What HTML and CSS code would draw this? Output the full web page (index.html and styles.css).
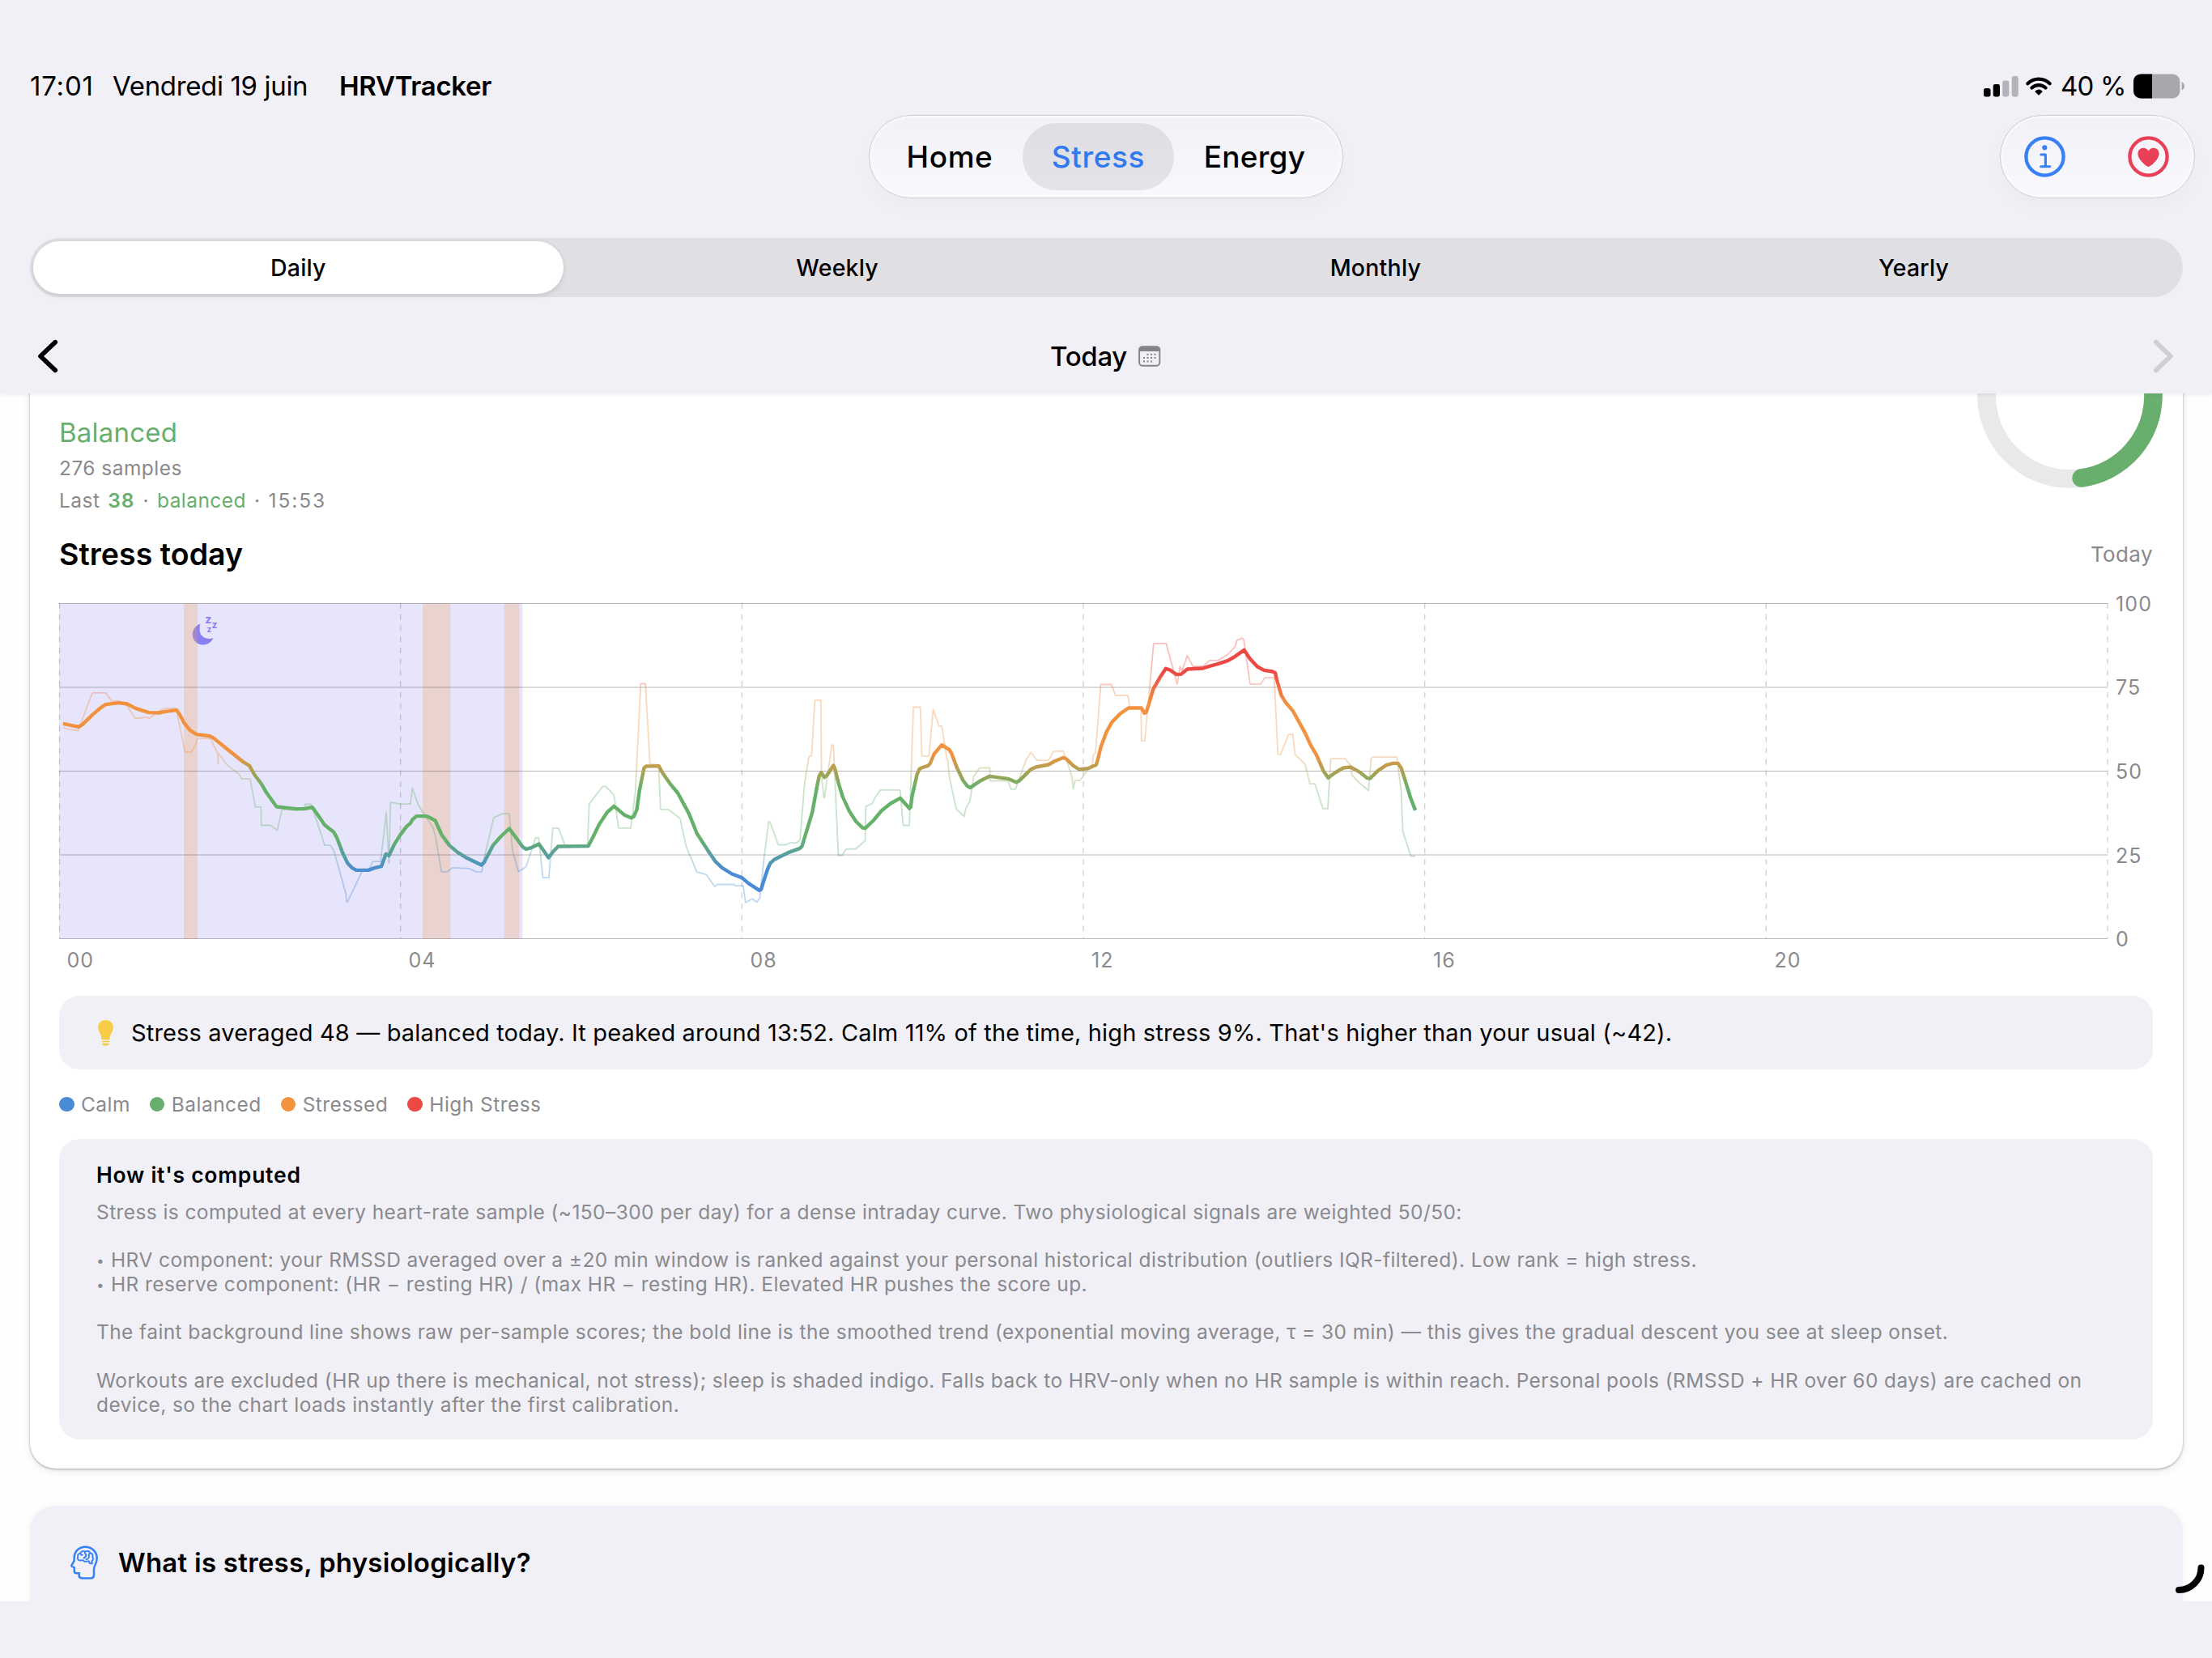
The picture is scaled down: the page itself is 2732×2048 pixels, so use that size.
FILE: index.html
```html
<!DOCTYPE html>
<html lang="en">
<head>
    <meta charset="UTF-8">
    <meta name="viewport" content="width=device-width, initial-scale=1.0">
    <title>HRVTracker</title>
    <link rel="stylesheet" href="styles.css">
</head>
<body>

    <!-- Fixed header -->
    <header class="header">
        <div class="status-bar">
            <div class="status-left">
                <span class="clock">17:01</span>
                <span class="date">Vendredi 19 juin</span>
                <span class="app-name">HRVTracker</span>
            </div>
            <div class="status-right">
                <svg class="signal" width="43" height="26" viewBox="0 0 43 26">
                    <rect x="0" y="15" width="8.5" height="10.4" rx="2.6"/>
                    <rect x="11.7" y="10" width="8.3" height="15.4" rx="2.4"/>
                    <rect class="off" x="23.2" y="5.6" width="8.1" height="19.8" rx="2.4"/>
                    <rect class="off" x="34.7" y="0" width="8.1" height="25.4" rx="2.4"/>
                </svg>
                <svg class="wifi" width="32" height="24" viewBox="0 0 32 24">
                    <path d="M2.4 8.2a19.6 19.6 0 0 1 27.2 0M7.5 13.6a12.3 12.3 0 0 1 17 0"/>
                    <path class="dot" d="M16 22.8l-4.2-4.1a1 1 0 0 1 .1-1.5 6.6 6.6 0 0 1 8.2 0 1 1 0 0 1 .1 1.5z"/>
                </svg>
                <span class="percent">40 %</span>
                <svg class="battery" width="64" height="31" viewBox="0 0 64 31">
                    <clipPath id="cell"><rect x="0" y="0.4" width="57.4" height="30" rx="9"/></clipPath>
                    <g clip-path="url(#cell)">
                        <rect width="58" height="31" fill="#a8a7ad"/>
                        <rect width="23" height="31" fill="#000"/>
                    </g>
                    <path d="M59.6 9.9q3.4 1.6 3.4 5.3t-3.4 5.3z" fill="#a8a7ad"/>
                </svg>
            </div>
        </div>

        <div class="toolbar">
            <nav class="tabs glass">
                <a class="tab tab-home">Home</a>
                <a class="tab tab-stress active">Stress</a>
                <a class="tab tab-energy">Energy</a>
            </nav>
            <div class="actions glass">
                <svg width="51" height="51" viewBox="0 0 51 51" fill="none" stroke="#3880f6" stroke-linecap="round" stroke-linejoin="round">
                    <circle cx="25.5" cy="25.5" r="23.1" stroke-width="4.3"/>
                    <circle cx="25.3" cy="14.3" r="3.1" fill="#3880f6" stroke="none"/>
                    <path d="M20.8 23h5.6v14.6M20.7 37.8h11" stroke-width="3.1"/>
                </svg>
                <svg width="51" height="51" viewBox="0 0 51 51">
                    <circle cx="25.5" cy="25.5" r="23.1" fill="none" stroke="#e94057" stroke-width="4.3"/>
                    <path d="M25.5 38.2c-1.2 0-13.1-8.2-13.1-16.4 0-4.2 2.9-7.1 6.7-7.1 2.8 0 5.1 1.4 6.4 3.9 1.3-2.5 3.6-3.9 6.4-3.9 3.8 0 6.7 2.9 6.7 7.1 0 8.2-11.9 16.4-13.1 16.4z" fill="#e94057"/>
                </svg>
            </div>
        </div>

        <div class="segmented">
            <div class="segment selected">Daily</div>
            <div class="segment">Weekly</div>
            <div class="segment">Monthly</div>
            <div class="segment">Yearly</div>
        </div>

        <div class="date-nav">
            <svg class="chevron" width="26" height="42" viewBox="0 0 26 42">
                <path d="M22.3 3.6L4 21l18.3 17.4"/>
            </svg>
            <div class="date-label">
                Today
                <svg width="28" height="26" viewBox="0 0 28 26">
                    <rect x="1.1" y="1.1" width="25.2" height="23.6" rx="4" fill="none" stroke="#85848a" stroke-width="1.9"/>
                    <path d="M1 7V5a4 4 0 0 1 4-4h17.5a4 4 0 0 1 4 4v2z" fill="#85848a"/>
                    <path d="M10.5 10.8h2M15 10.8h2M19.5 10.8h2M6 15.1h2M10.5 15.1h2M15 15.1h2M19.5 15.1h2M6 19.4h2M10.5 19.4h2M15 19.4h2" stroke="#85848a" stroke-width="2"/>
                </svg>
            </div>
            <svg class="chevron disabled" width="26" height="42" viewBox="0 0 26 42">
                <path d="M3.7 3.6L22 21 3.7 38.4"/>
            </svg>
        </div>
    </header>

    <!-- Scrolling content -->
    <main class="content">
        <section class="card stress-card">
            <div class="summary">
                <div class="summary-text">
                    <div class="level">Balanced</div>
                    <div class="small">276 samples</div>
                    <div class="small last">
                        <span>Last</span>
                        <b class="green">38</b>
                        <span>·</span>
                        <span class="green">balanced</span>
                        <span>·</span>
                        <span class="time">15:53</span>
                    </div>
                </div>
                <svg class="ring" width="229" height="229" viewBox="0 0 229 229" fill="none" stroke-width="22.6">
                    <circle cx="114.5" cy="114.5" r="103" stroke="#e9e9e9"/>
                    <circle cx="114.5" cy="114.5" r="103" stroke="#68af6d" stroke-linecap="round" pathLength="100" stroke-dasharray="47.8 100" transform="rotate(-90 114.5 114.5)"/>
                </svg>
            </div>

            <div class="chart-head">
                <h2>Stress today</h2>
                <span class="range">Today</span>
            </div>

            <svg class="chart" width="2584" height="460" viewBox="0 0 2584 460">
                <defs>
                    <!-- Score to colour scale, top is 100 and bottom is 0 -->
                    <linearGradient id="scale" gradientUnits="userSpaceOnUse" x1="0" y1="0" x2="0" y2="1242">
                        <stop offset="0.2" stop-color="#ec4844"/>
                        <stop offset="0.3" stop-color="#f2923e"/>
                        <stop offset="0.45" stop-color="#f2923e"/>
                        <stop offset="0.55" stop-color="#65b16a"/>
                        <stop offset="0.7" stop-color="#65b16a"/>
                        <stop offset="0.8" stop-color="#498bd5"/>
                    </linearGradient>
                </defs>

                <!-- Sleep -->
                <rect x="0" y="0.5" width="572.5" height="414" fill="#e7e5fc"/>
                <g class="moon">
                    <path d="M174.2 25.5c-5.6 2.2-9.4 7.2-9.4 13.2 0 7.4 5.7 12.7 12.9 12.7 5.8 0 10.6-3.2 12.6-8.4-1.6.7-3.400 1-5 1-7 0-11.7-4.7-11.7-11.7 0-2.4.2-4.900.6-6.800z"/>
                    <text x="180.300" y="25.300" font-size="14">z</text>
                    <text x="188.500" y="31.300" font-size="12">z</text>
                    <text x="182.600" y="36" font-size="10">z</text>
                </g>
                <g fill="#f3a04f" fill-opacity="0.260">
                    <rect x="154.200" y="0.500" width="16.600" height="414"/>
                    <rect x="449" y="0.500" width="34.300" height="414"/>
                    <rect x="549.700" y="0.500" width="18.600" height="414"/>
                </g>

                <!-- Grid -->
                <g class="grid">
                    <path class="thin" d="M0 .5H2530M0 207.5H2530M0 414.5H2530"/>
                    <path class="wide" d="M0 104H2530M0 311H2530"/>
                    <path class="hours" d="M.5 0V414M421.700 0V414M843.300 0V414M1265 0V414M1686.700 0V414M2108.300 0V414M2530 0V414"/>
                </g>

                <!-- Raw samples and smoothed trend -->
                <svg x="0" y="0.5" width="2530" height="414" viewBox="0 0 6198.5 1242" preserveAspectRatio="none">
                    <polyline class="raw" points="12,459 31,467 58,471 93,354 101,331 141,331 159,361 181,361 206,379 230,426 266,421 273,426 301,399 320,388 354,388 381,551 399,551 413,524 419,500 458,500 480,556 481,594 482,554 506,595 546,634 552,650 578,650 594,754 611,754 612,822 640,822 660,840 675,762 721,766 743,759 744,744 763,744 804,896 821,896 831,914 868,1076 870,1105 873,1105 916,994 938,986 949,956 973,956 990,774 998,962 1003,736 1031,743 1063,743 1069,684 1086,744 1106,784 1131,829 1138,859 1157,994 1174,994 1191,979 1241,982 1261,994 1279,994 1286,944 1315,794 1341,779 1362,779 1372,916 1390,994 1413,976 1442,868 1451,868 1464,1016 1482,1016 1494,832 1511,832 1531,896 1599,894 1604,742 1645,678 1654,678 1679,709 1693,832 1730,832 1744,694 1760,297 1774,297 1788,594 1814,599 1820,763 1843,763 1879,796 1897,899 1930,995 1958,1004 1984,1049 1992,1041 2042,1041 2046,1046 2070,1046 2077,1108 2098,1094 2111,1106 2120,1092 2134,934 2147,809 2151,809 2176,894 2200,894 2210,887 2232,887 2242,874 2256,664 2269,567 2277,564 2287,358 2305,358 2307,639 2314,719 2316,719 2338,525 2343,525 2358,933 2370,933 2380,911 2410,909 2439,879 2441,752 2461,741 2468,721 2486,691 2545,691 2554,822 2573,822 2585,384 2606,384 2611,565 2632,565 2645,392 2663,454 2671,454 2686,574 2689,579 2694,644 2715,762 2739,789 2743,762 2756,732 2768,640 2786,609 2816,609 2817,657 2872,657 2880,688 2894,688 2926,579 2941,551 2959,581 2994,581 3010,547 3039,547 3064,639 3069,687 3074,656 3089,656 3111,619 3127,594 3130,559 3136,554 3152,300 3184,300 3197,341 3234,341 3240,387 3274,387 3275,509 3285,509 3301,294 3312,148 3350,148 3383,299 3392,234 3398,249 3414,193 3431,233 3462,233 3481,211 3507,211 3536,189 3559,159 3564,136 3580,128 3585,136 3604,299 3635,299 3648,275 3677,275 3688,559 3696,559 3720,485 3733,485 3740,560 3770,595 3785,668 3800,668 3824,760 3839,760 3848,575 3891,575 3906,596 3912,636 3936,666 3962,693 3970,576 3975,569 4048,569 4061,694 4066,844 4090,936 4104,936"/>
                    <polyline class="trend" points="12,445 59,457 71,448 101,412 126,386 141,374 181,368 206,372 231,388 271,404 303,405 318,401 356,395 366,414 379,444 396,469 416,485 456,491 468,499 506,537 556,586 576,601 592,636 611,666 626,698 658,753 716,761 741,761 766,755 781,780 804,821 831,847 841,869 858,924 873,962 886,979 899,988 936,988 956,979 975,974 989,928 998,934 1016,889 1033,856 1051,827 1063,814 1069,801 1081,788 1113,788 1138,804 1158,858 1181,896 1206,922 1231,941 1278,969 1286,959 1313,896 1336,864 1362,834 1376,857 1403,902 1413,910 1428,905 1452,891 1481,942 1493,922 1510,900 1601,899 1614,869 1634,819 1658,774 1679,751 1711,784 1731,794 1739,789 1748,764 1756,694 1770,609 1776,603 1815,602 1824,624 1851,671 1872,702 1906,779 1930,852 1961,911 1986,956 2006,979 2036,1002 2066,1016 2086,1037 2119,1063 2124,1060 2131,1032 2144,984 2152,962 2164,949 2206,923 2242,907 2248,899 2279,774 2294,674 2300,639 2306,626 2316,644 2324,636 2343,600 2348,614 2358,664 2371,716 2391,769 2411,807 2431,831 2439,833 2464,804 2489,767 2516,741 2545,721 2573,759 2577,754 2581,714 2596,634 2603,614 2609,609 2629,601 2635,594 2648,557 2671,524 2694,542 2701,557 2717,609 2736,657 2748,676 2757,682 2786,658 2816,640 2871,649 2896,662 2906,656 2941,614 2956,606 2994,597 3011,585 3039,571 3048,576 3069,601 3087,615 3113,611 3138,598 3144,574 3153,529 3170,474 3186,439 3211,408 3236,387 3275,387 3284,406 3289,404 3296,379 3311,316 3331,274 3349,241 3361,246 3381,263 3395,262 3414,243 3461,240 3481,232 3506,224 3536,212 3556,198 3586,172 3603,204 3626,234 3646,247 3671,252 3680,257 3684,279 3698,339 3711,366 3733,397 3771,481 3788,527 3804,559 3826,621 3840,646 3861,627 3886,609 3908,606 3936,625 3958,647 3967,648 3991,619 4016,599 4036,592 4051,592 4061,609 4074,659 4089,719 4104,766"/>
                </svg>

                <g class="axis">
                    <text x="2540" y="9.5">100</text>
                    <text x="2540" y="113">75</text>
                    <text x="2540" y="216.5">50</text>
                    <text x="2540" y="320.5">25</text>
                    <text x="2540" y="424">0</text>
                    <text x="9.5" y="450">00</text>
                    <text x="431.5" y="450">04</text>
                    <text x="853.5" y="450">08</text>
                    <text x="1275" y="450">12</text>
                    <text x="1697" y="450">16</text>
                    <text x="2118.5" y="450">20</text>
                </g>
            </svg>

            <div class="insight">
                <svg width="19" height="32" viewBox="0 0 19 32" fill="#f8cd46">
                    <path d="M9.5 0C4 0 .3 3.9.3 9c0 3.4 1.3 5.6 2.5 8 .9 1.800 1.300 3.400 1.500 5.400.1 1.300.6 1.900 1.700 1.900h7c1.100 0 1.600-.6 1.700-1.900.2-2 .6-3.600 1.500-5.400 1.200-2.400 2.500-4.600 2.500-8 0-5.100-3.700-9-9.200-9z"/>
                    <rect x="4.6" y="25.7" width="9.8" height="1.6" rx=".8"/>
                    <path d="M4.8 28.8h9.4c-.5 1.800-2.400 3-4.700 3s-4.200-1.200-4.700-3z"/>
                </svg>
                <p>Stress averaged 48 — balanced today. It peaked around 13:52. Calm 11% of the time, high stress 9%. That's higher than your usual (~42).</p>
            </div>

            <div class="legend">
                <span class="key calm">Calm</span>
                <span class="key balanced">Balanced</span>
                <span class="key stressed">Stressed</span>
                <span class="key high">High Stress</span>
            </div>

            <div class="method">
                <h3>How it's computed</h3>
                <p>Stress is computed at every heart-rate sample (~150–300 per day) for a dense intraday curve. Two physiological signals are weighted 50/50:</p>
                <p><span class="bullet">•</span>HRV component: your RMSSD averaged over a ±20 min window is ranked against your personal historical distribution (outliers IQR-filtered). Low rank = high stress.<br>
                <span class="bullet">•</span>HR reserve component: (HR − resting HR) / (max HR − resting HR). Elevated HR pushes the score up.</p>
                <p>The faint background line shows raw per-sample scores; the bold line is the smoothed trend (exponential moving average, τ = 30 min) — this gives the gradual descent you see at sleep onset.</p>
                <p>Workouts are excluded (HR up there is mechanical, not stress); sleep is shaded indigo. Falls back to HRV-only when no HR sample is within reach. Personal pools (RMSSD + HR over 60 days) are cached on device, so the chart loads instantly after the first calibration.</p>
            </div>
        </section>

        <section class="card info-card">
            <svg width="35" height="42" viewBox="0 0 35 42" fill="none" stroke="#3880f6" stroke-linecap="round" stroke-linejoin="round">
                <path stroke-width="2.5" d="M10.8 38.8V34.3H7.2Q4.8 34.3 4.8 31.8V27.3L2.2 26Q1 25.3 1.7 24L4.6 19.2V16C4.6 7.5 10.3 1.7 18.3 1.7S32.7 7.8 32.7 15.8C32.7 20 31.5 22.2 30 25.3Q29 27.3 29 30V36C29 39 27.5 40.6 24.5 40.6H17Q12.5 40.6 10.8 38.8"/>
                <path stroke-width="1.9" d="M13.5 18.3C10 19.5 8 16.5 9.2 14 8.5 11.5 10.3 9.6 12.3 9.6 13.2 6.8 16.5 6.2 18.2 7.8 20.5 6 23.6 7 24.2 9.2 27 9.6 28.2 12 27.2 14 28.8 16.5 27.7 18.6 26.3 19.2L27 22.3 23.8 22 22.5 19.2C19.5 20.3 17 20.5 15.6 18.2L13.5 18.3M12.3 9.6Q13 12.2 15 11.6M18.2 7.8Q17 10 19.3 11 19.5 14.5 16.5 15.5M24.2 9.2Q21.8 12 23 14.5 22 17 19.5 17.2"/>
            </svg>
            <h3>What is stress, physiologically?</h3>
        </section>

        <svg class="spinner" width="44" height="44" viewBox="0 0 44 44">
            <path d="M36.5 8.5A27.5 27.5 0 0 1 9 36"/>
        </svg>
    </main>

</body>
</html>
```
FILE: styles.css
```css
* {
    margin: 0;
    padding: 0;
    box-sizing: border-box;
}

body {
    width: 2732px;
    height: 2048px;
    overflow: hidden;
    background-color: #f1f0f6;
    font-family: Inter, "Liberation Sans", sans-serif;
    color: #000;
}

svg {
    display: block;
    flex: none;
}

/* Header */
.header {
    position: relative;
    z-index: 1;
    height: 486px;
    padding-top: 86px;
    background-color: #f1f0f6;
    box-shadow: 0 1px 5px rgba(0, 0, 0, 0.09);
}

.status-bar {
    display: flex;
    justify-content: space-between;
    align-items: center;
    height: 41px;
    padding: 0 34px 0 37px;
    font-size: 33px;
    line-height: 41px;
    white-space: nowrap;
}
.status-left,
.status-right {
    display: flex;
    align-items: center;
}
.clock {
    width: 102px;
    letter-spacing: 0.8px;
}
.date {
    width: 280px;
    letter-spacing: -0.35px;
}
.app-name {
    font-weight: 600;
    letter-spacing: -0.3px;
}
.signal .off {
    fill: #b4b3b9;
}
.wifi {
    margin: 0 11px 0 9px;
    fill: none;
    stroke: #000;
    stroke-width: 4.2;
    stroke-linecap: round;
}
.wifi .dot {
    fill: #000;
    stroke: none;
}
.percent {
    width: 90px;
    letter-spacing: -0.8px;
}
.battery {
    margin-right: -1px;
}

/* Tabs and actions */
.toolbar {
    display: grid;
    grid-template-columns: 1fr auto 1fr;
    margin-top: 15px;
    padding: 0 21px;
}
.glass {
    height: 103px;
    border: 1px solid #cdccd1;
    border-radius: 52px;
    background: linear-gradient(#f2f1f7, #f9f8fd);
    box-shadow: inset 0 0 4px 1px #fff, 0 10px 24px rgba(0, 0, 0, 0.025);
}
.tabs {
    grid-column: 2;
    display: flex;
    align-items: center;
    gap: 2px;
    padding: 0 11px;
}
.tab {
    height: 83px;
    border-radius: 42px;
    font-size: 37px;
    font-weight: 500;
    line-height: 83px;
    letter-spacing: 0.6px;
    text-align: center;
}
.tab-home {
    width: 176px;
}
.tab-stress {
    width: 187px;
}
.tab-energy {
    width: 195px;
    letter-spacing: 0.2px;
}
.tab.active {
    background: linear-gradient(#dfdee3, #e4e3e9);
    color: #3179f0;
}
.actions {
    display: flex;
    justify-content: space-between;
    align-items: center;
    justify-self: end;
    width: 241px;
    padding: 0 31px 0 29px;
}

/* Segmented control */
.segmented {
    display: grid;
    grid-template-columns: repeat(4, 1fr);
    height: 73px;
    margin: 49px 36px 0 37px;
    border-radius: 37px;
    background-color: #e0dfe4;
}
.segment {
    margin: 4px 0;
    border-radius: 33px;
    font-size: 28.5px;
    font-weight: 500;
    line-height: 65px;
    letter-spacing: 0.2px;
    text-align: center;
}
.segment.selected {
    margin: 4px 6px 4px 4px;
    background-color: #fff;
    box-shadow: 0 2px 6px rgba(0, 0, 0, 0.12);
}

/* Day navigation */
.date-nav {
    display: flex;
    justify-content: space-between;
    align-items: center;
    height: 42px;
    margin-top: 52px;
    padding: 0 47px 0 46px;
}
.chevron {
    fill: none;
    stroke: #000;
    stroke-width: 5.6;
    stroke-linecap: round;
    stroke-linejoin: round;
}
.chevron.disabled {
    stroke: #cfced4;
}
.date-label {
    display: flex;
    align-items: center;
    gap: 14px;
    font-size: 33px;
    font-weight: 500;
    letter-spacing: -0.3px;
}

/* Content */
.content {
    position: relative;
    display: flow-root;
    height: 1492px;
    overflow: hidden;
    background-color: #fefefe;
}
.card {
    margin: 0 36px 0 37px;
    border-radius: 32px;
}
.stress-card {
    height: 1474px;
    margin-top: -146px;
    padding: 34px 37px 0 36px;
    background-color: #fff;
    box-shadow: 0 1px 3px rgba(0, 0, 0, 0.32), 0 3px 12px rgba(0, 0, 0, 0.08);
}

/* Summary */
.summary {
    display: flex;
    justify-content: space-between;
    height: 262px;
    margin-right: -12px;
}
.summary-text {
    display: flex;
    flex-direction: column;
    justify-content: flex-end;
    gap: 4px;
}
.level {
    color: #68af6d;
    font-size: 33px;
    line-height: 44px;
    letter-spacing: 0.2px;
}
.small {
    color: #8a8a8e;
    font-size: 24.5px;
    line-height: 36px;
    letter-spacing: 0.45px;
}
.last {
    display: flex;
    gap: 10px;
}
.last .green {
    color: #68af6d;
}
.last b {
    font-weight: 600;
    letter-spacing: 0.9px;
}
.time {
    letter-spacing: 1.9px;
}

/* Chart */
.chart-head {
    display: flex;
    justify-content: space-between;
    align-items: center;
    height: 46px;
    margin-top: 25px;
}
.chart-head h2 {
    font-size: 37.5px;
    font-weight: 600;
    letter-spacing: 0.05px;
}
.range {
    color: #8a8a8e;
    font-size: 26px;
    letter-spacing: 0.4px;
}
.chart {
    margin-top: 38px;
    overflow: visible;
}
.moon {
    fill: #8980f0;
    font-weight: 700;
}
.grid {
    fill: none;
    stroke: #3c3c43;
}
.grid .thin {
    stroke-opacity: 0.36;
}
.grid .wide {
    stroke-width: 2;
    stroke-opacity: 0.18;
}
.grid .hours {
    stroke-width: 1.3;
    stroke-opacity: 0.24;
    stroke-dasharray: 6.8 6.95;
}
.raw,
.trend {
    fill: none;
    stroke: url(#scale);
    stroke-linejoin: round;
    vector-effect: non-scaling-stroke;
}
.raw {
    stroke-width: 1.8;
    opacity: 0.34;
}
.trend {
    stroke-width: 4.4;
}
.axis {
    fill: #8a8a8e;
    font-size: 25px;
    letter-spacing: 1.1px;
}

/* Insight */
.insight {
    display: flex;
    align-items: center;
    height: 91px;
    margin-top: 25px;
    padding-left: 48px;
    border-radius: 25px;
    background-color: #f1f0f6;
    font-size: 29px;
    letter-spacing: 0.15px;
    white-space: nowrap;
}
.insight p {
    margin-left: 22px;
}

/* Legend */
.legend {
    display: flex;
    gap: 24px;
    margin: 25px 0;
    color: #8a8a8e;
    font-size: 24.5px;
    line-height: 36px;
    letter-spacing: 0.45px;
}
.key {
    display: flex;
    align-items: center;
    gap: 8.5px;
}
.key::before {
    content: "";
    width: 18.5px;
    height: 18.5px;
    border-radius: 50%;
}
.calm::before {
    background-color: #498bd5;
}
.balanced::before {
    background-color: #68af6d;
}
.stressed::before {
    background-color: #f2923e;
}
.high::before {
    background-color: #ec4844;
}

/* Explanation */
.method {
    height: 371px;
    padding: 27px 40px 0 46px;
    border-radius: 25px;
    background-color: #f1f0f6;
}
.method h3 {
    margin-bottom: 14.5px;
    font-size: 26.5px;
    font-weight: 600;
    line-height: 34px;
    letter-spacing: 0.75px;
}
.method p {
    margin-bottom: 29.75px;
    color: #8a8a8e;
    font-size: 24.5px;
    line-height: 29.75px;
    letter-spacing: 0.41px;
}
.bullet {
    display: inline-block;
    width: 18px;
    font-size: 17px;
    line-height: 20px;
    vertical-align: 2px;
}

.info-card {
    display: flex;
    align-items: center;
    gap: 24px;
    height: 260px;
    margin-top: 46px;
    padding: 0 49px 121px 50px;
    background-color: #f1f0f6;
    box-shadow: 0 0 8px rgba(0, 0, 0, 0.05);
}
.info-card h3 {
    font-size: 33px;
    font-weight: 600;
    letter-spacing: 0.25px;
}

/* Loading arc in the corner */
.spinner {
    position: absolute;
    right: 6px;
    bottom: 6px;
    fill: none;
    stroke: #000;
    stroke-width: 8;
    stroke-linecap: round;
}
```
